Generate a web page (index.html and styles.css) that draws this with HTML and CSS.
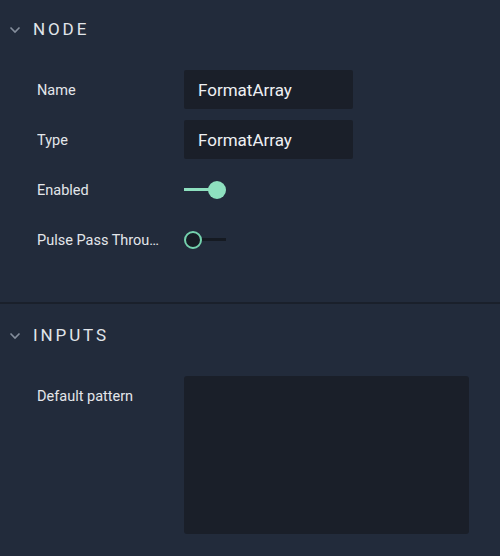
FILE: index.html
```html
<!DOCTYPE html>
<html>
<head>
<meta charset="utf-8">
<link rel="stylesheet" href="styles.css">
</head>
<body>
<div class="panel">
  <section class="section section-node">
    <div class="header">
      <svg class="chev" width="12" height="8" viewBox="0 0 12 8"><path d="M1.5 1.5 L6 6 L10.5 1.5" fill="none" stroke="#858e9c" stroke-width="1.6"/></svg>
      <span class="title">NODE</span>
    </div>
    <div class="rows">
      <div class="row">
        <div class="label">Name</div>
        <div class="input">FormatArray</div>
      </div>
      <div class="row">
        <div class="label">Type</div>
        <div class="input">FormatArray</div>
      </div>
      <div class="row">
        <div class="label">Enabled</div>
        <div class="toggle on"><span class="track"></span><span class="knob"></span></div>
      </div>
      <div class="row">
        <div class="label">Pulse Pass Through</div>
        <div class="toggle off"><span class="knob"></span><span class="track"></span></div>
      </div>
    </div>
  </section>
  <div class="sep"></div>
  <section class="section section-inputs">
    <div class="header">
      <svg class="chev" width="12" height="8" viewBox="0 0 12 8"><path d="M1.5 1.5 L6 6 L10.5 1.5" fill="none" stroke="#858e9c" stroke-width="1.6"/></svg>
      <span class="title">INPUTS</span>
    </div>
    <div class="rows">
      <div class="row row-top">
        <div class="label">Default pattern</div>
        <div class="textarea"></div>
      </div>
    </div>
  </section>
</div>
</body>
</html>
```
FILE: styles.css
```css
html, body {
  margin: 0;
  padding: 0;
  background: #222b3b;
  width: 500px;
  height: 556px;
  overflow: hidden;
  font-family: Roboto, "Liberation Sans", sans-serif;
}
.panel {
  display: flex;
  flex-direction: column;
}
.section-node {
  padding-bottom: 43px;
}
.section-inputs {
  padding-top: 2px;
}
.header {
  height: 58px;
  display: flex;
  align-items: center;
  padding-left: 9px;
}
.chev {
  margin-right: 12px;
  margin-top: 1px;
}
.title {
  font-size: 17px;
  letter-spacing: 2.9px;
  color: #e1e5ea;
}
.rows {
  display: flex;
  flex-direction: column;
  gap: 11px;
  padding-top: 12px;
  padding-left: 37px;
}
.row {
  display: flex;
  align-items: center;
  height: 39px;
}
.row-top {
  align-items: flex-start;
  height: auto;
}
.label {
  width: 127px;
  margin-right: 20px;
  font-size: 14.5px;
  line-height: 39px;
  padding-top: 2px;
  color: #e3e6ea;
  white-space: nowrap;
  overflow: hidden;
  text-overflow: ellipsis;
}
.row-top .label {
  padding-top: 1px;
}
.input {
  width: 155px;
  height: 39px;
  padding-left: 14px;
  background: #1a1f29;
  border-radius: 2px;
  font-size: 17px;
  line-height: 40px;
  color: #eef0f3;
}
.textarea {
  width: 285px;
  height: 158px;
  background: #1a1f29;
  border-radius: 3px;
}
.toggle {
  display: flex;
  align-items: center;
  width: 42px;
  height: 20px;
}
.toggle .track {
  height: 3px;
  flex: 1;
}
.toggle.on .track {
  background: #8ee0bf;
  margin-right: -1px;
}
.toggle.on .knob {
  width: 18px;
  height: 18px;
  border-radius: 50%;
  background: #8ee0bf;
}
.toggle.off .knob {
  width: 14px;
  height: 14px;
  border-radius: 50%;
  border: 2.5px solid #74d1ad;
  background: #171c25;
}
.toggle.off .track {
  background: #151a22;
}
.sep {
  height: 2px;
  background: #1a202b;
}
```
